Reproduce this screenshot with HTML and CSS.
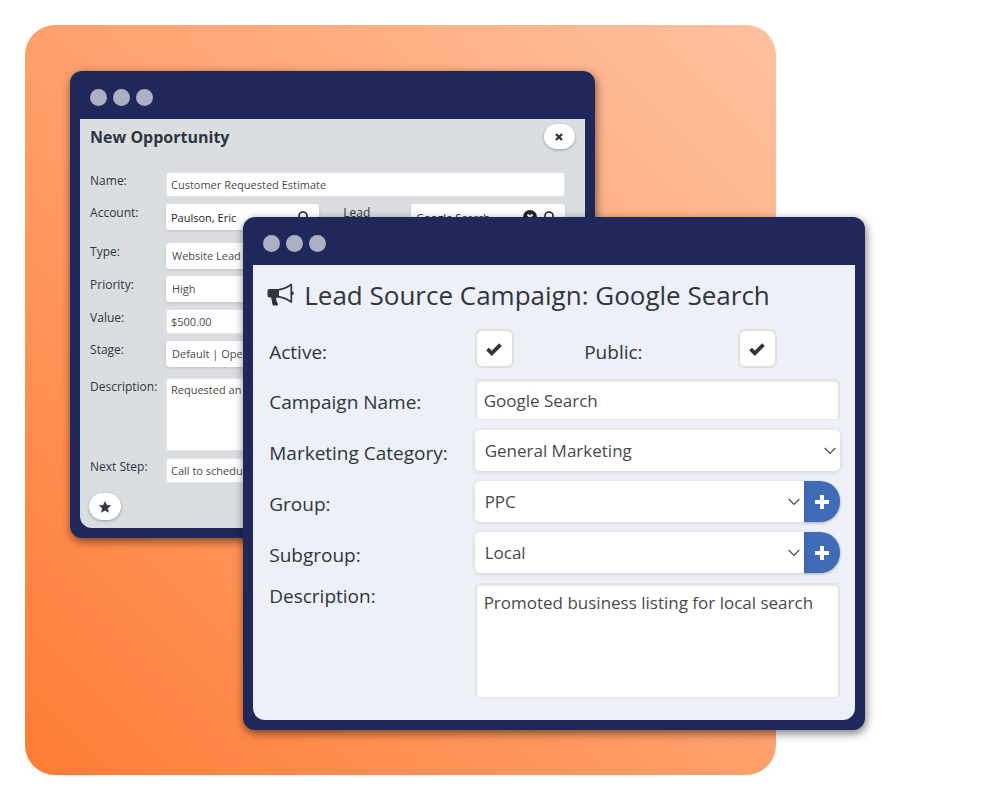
FILE: index.html
```html
<!DOCTYPE html>
<html lang="en">
  <head>
    <meta charset="UTF-8" />
    <meta name="viewport" content="width=device-width, initial-scale=1.0" />
    <title>Lead Source Campaign</title>
    <link rel="stylesheet" href="styles.css">
  </head>
  <body>
    <main class="scene">
      <div class="backdrop"></div>

      <section class="window window-opportunity">
        <div class="titlebar">
          <span class="dot"></span><span class="dot"></span><span class="dot"></span>
        </div>
        <form class="window-body">
          <header class="opp-header">
            <h2>New Opportunity</h2>
            <button type="button" class="pill" aria-label="Close">
              <svg width="8" height="8" viewBox="0 0 8 8"><path d="M1 1l6 6M7 1l-6 6" stroke="currentColor" stroke-width="2.4" /></svg>
            </button>
          </header>

          <div class="opp-fields">
            <label for="opp-name">Name:</label>
            <input id="opp-name" class="inset" type="text" value="Customer Requested Estimate" />

            <label for="opp-account">Account:</label>
            <div class="opp-split">
              <div class="lookup">
                <input id="opp-account" type="text" value="Paulson, Eric" />
                <svg width="12" height="14" viewBox="0 0 12 14"><circle cx="6" cy="6" r="4" fill="none" stroke="currentColor" stroke-width="1.6" /><path d="M8.5 9.5l3 4" stroke="currentColor" stroke-width="1.8" /></svg>
              </div>
              <label for="opp-source">Lead Source:</label>
              <div class="lookup">
                <input id="opp-source" type="text" value="Google Search" />
                <svg width="14" height="14" viewBox="0 0 14 14"><circle cx="7" cy="7" r="7" fill="currentColor" /><path d="M4.5 4.5l5 5M9.5 4.5l-5 5" stroke="#fff" stroke-width="2" /></svg>
                <svg width="12" height="14" viewBox="0 0 12 14"><circle cx="6" cy="6" r="4" fill="none" stroke="currentColor" stroke-width="1.6" /><path d="M8.5 9.5l3 4" stroke="currentColor" stroke-width="1.8" /></svg>
              </div>
            </div>

            <label for="opp-type">Type:</label>
            <select id="opp-type"><option>Website Lead</option></select>

            <label for="opp-priority">Priority:</label>
            <select id="opp-priority"><option>High</option></select>

            <label for="opp-value">Value:</label>
            <input id="opp-value" class="inset" type="text" value="$500.00" />

            <label for="opp-stage">Stage:</label>
            <select id="opp-stage" class="last-select"><option>Default | Open</option></select>

            <label for="opp-description">Description:</label>
            <textarea id="opp-description" class="inset">Requested an estimate</textarea>

            <label for="opp-next">Next Step:</label>
            <input id="opp-next" class="inset" type="text" value="Call to schedule" />
          </div>

          <button type="button" class="pill pill-star" aria-label="Favorite">
            <svg width="12" height="12" viewBox="0 0 24 24"><path d="M12 1l3.3 7.3 8 .9-6 5.4 1.7 7.9-7-4-7 4 1.7-7.9-6-5.4 8-.9z" fill="currentColor" stroke="currentColor" stroke-linejoin="round" /></svg>
          </button>
        </form>
      </section>

      <section class="window window-campaign">
        <div class="titlebar">
          <span class="dot"></span><span class="dot"></span><span class="dot"></span>
        </div>
        <form class="window-body">
          <h1>
            <svg width="27" height="24" viewBox="0 0 27 24">
              <path d="M2.5 6H12v8.5H9.5q-.8 2 .4 4l1 2.5q.3 1.5-1 1.5H7q-1.2 0-1.6-1.2L4.2 14.5H2.5q-2 0-2-2V8q0-2 2-2z" fill="currentColor" />
              <path d="M11 6.900Q18 6 24.3 1.5v17.5Q18 14.5 11 13.6" fill="none" stroke="currentColor" stroke-width="1.7" stroke-linejoin="round" />
              <path d="M24.5 8q2.3.4 2.3 2.3t-2.3 2.3z" fill="currentColor" />
            </svg>
            Lead Source Campaign: Google Search
          </h1>

          <div class="campaign-fields">
            <label for="active">Active:</label>
            <div class="check-row">
              <span class="check">
                <input id="active" type="checkbox" checked />
                <svg width="18" height="14" viewBox="0 0 18 14"><path d="M2.5 7l4.3 4.3 8.7-8.7" fill="none" stroke="currentColor" stroke-width="3.8" /></svg>
              </span>
              <label for="public">Public:</label>
              <span class="check">
                <input id="public" type="checkbox" checked />
                <svg width="18" height="14" viewBox="0 0 18 14"><path d="M2.5 7l4.3 4.3 8.7-8.7" fill="none" stroke="currentColor" stroke-width="3.8" /></svg>
              </span>
            </div>

            <label for="campaign-name">Campaign Name:</label>
            <input id="campaign-name" class="inset" type="text" value="Google Search" />

            <label for="category">Marketing Category:</label>
            <div class="select">
              <select id="category"><option>General Marketing</option></select>
              <svg width="12" height="8" viewBox="0 0 12 8"><path d="M.7 1L6 6.3 11.3 1" fill="none" stroke="currentColor" stroke-width="1.2" /></svg>
            </div>

            <label for="group">Group:</label>
            <div class="select-add">
              <div class="select">
                <select id="group"><option>PPC</option></select>
                <svg width="12" height="8" viewBox="0 0 12 8"><path d="M.7 1L6 6.3 11.3 1" fill="none" stroke="currentColor" stroke-width="1.2" /></svg>
              </div>
              <button type="button" class="add" aria-label="Add group">
                <svg width="14" height="14" viewBox="0 0 14 14"><path d="M7 2v10M2 7h10" stroke="currentColor" stroke-width="4" stroke-linecap="square" /></svg>
              </button>
            </div>

            <label for="subgroup">Subgroup:</label>
            <div class="select-add">
              <div class="select">
                <select id="subgroup"><option>Local</option></select>
                <svg width="12" height="8" viewBox="0 0 12 8"><path d="M.7 1L6 6.3 11.3 1" fill="none" stroke="currentColor" stroke-width="1.2" /></svg>
              </div>
              <button type="button" class="add" aria-label="Add subgroup">
                <svg width="14" height="14" viewBox="0 0 14 14"><path d="M7 2v10M2 7h10" stroke="currentColor" stroke-width="4" stroke-linecap="square" /></svg>
              </button>
            </div>

            <label for="description" class="label-top">Description:</label>
            <textarea id="description" class="inset">Promoted business listing for local search</textarea>
          </div>
        </form>
      </section>
    </main>
  </body>
</html>
```
FILE: styles.css
```css
* {
  margin: 0;
  padding: 0;
  box-sizing: border-box;
}

body {
  font-family: "Open Sans", "Noto Sans", sans-serif;
  background: #fff;
  color: #2e3640;
}

input,
select,
textarea,
button {
  font: inherit;
  border: none;
  outline: none;
  appearance: none;
  min-width: 0;
}

svg {
  flex: none;
}

/* backdrop and both windows share one grid cell */
.scene {
  display: grid;
  padding: 25px 0;
  min-height: 100vh;
}

.backdrop,
.window {
  grid-area: 1 / 1;
}

.backdrop {
  width: 75%;
  margin-left: 2.5%;
  border-radius: 30px;
  background: linear-gradient(45deg, #ff7c35 0%, #ffa06c 50%, #ffc19f 100%);
}

.window {
  align-self: start;
  background: #20285b;
  border-radius: 12px;
  padding: 0 10px 10px;
  box-shadow: 1px 3px 10px rgba(0, 0, 0, 0.55);
}

.window-opportunity {
  width: 52.4%;
  margin: 46px 0 0 7%;
}

.window-campaign {
  width: 62.1%;
  margin: 192px 0 45px 24.3%;
}

.titlebar {
  display: flex;
  align-items: center;
  gap: 6px;
  height: 48px;
  padding: 4px 10px 0;
}

.dot {
  width: 17px;
  height: 17px;
  border-radius: 50%;
  background: #adafc5;
}

.window-body {
  border-radius: 0 0 12px 12px;
}

/* New Opportunity */
.window-opportunity .window-body {
  background: #dadee1;
  font-size: 11px;
  line-height: 16px;
  padding-bottom: 8px;
}

.opp-header {
  display: flex;
  justify-content: space-between;
  align-items: center;
  height: 40px;
  padding: 0 10px 4px;
  border-bottom: 1px solid #dedede;
}

.opp-header h2 {
  font-size: 16px;
  line-height: 24px;
}

.pill {
  display: flex;
  align-items: center;
  justify-content: center;
  width: 31px;
  height: 25px;
  border-radius: 14px;
  background: #fff;
  color: #2e3640;
  box-shadow: 0 1px 3px rgba(0, 0, 0, 0.3);
}

.pill-star {
  width: 32px;
  height: 27px;
  margin: 10px 0 0 9px;
}

.opp-fields {
  display: grid;
  grid-template-columns: 16% 1fr;
  align-items: start;
  row-gap: 7px;
  padding: 13px 20px 0 10px;
}

.opp-fields label {
  padding-top: 1px;
  font-size: 12px;
}

.opp-fields input,
.opp-fields select,
.opp-fields textarea {
  width: 100%;
  height: 26px;
  padding: 0 6px;
  border-radius: 3px;
  background: #fff;
  color: #4a4a4a;
}

.opp-fields select,
.lookup {
  box-shadow: 0 1px 3px rgba(0, 0, 0, 0.12);
}

.opp-fields .inset {
  height: 25px;
  border: 1px solid #e2e4e6;
  padding: 0 4px;
}

.opp-fields textarea.inset {
  height: 73px;
  padding-top: 3px;
  resize: none;
}

.opp-fields .last-select {
  margin-bottom: 4px;
}

.opp-split {
  display: grid;
  grid-template-columns: 38.5% 11% 38.5%;
  justify-content: space-between;
  align-items: start;
  height: 32px;
}

.lookup {
  display: flex;
  align-items: center;
  gap: 6px;
  height: 26px;
  padding-right: 10px;
  border-radius: 3px;
  background: #fff;
  color: #1f2328;
}

.opp-fields .lookup input {
  flex: 1;
  padding: 0 5px;
  color: #1f2328;
}

/* Lead Source Campaign */
.window-campaign .window-body {
  background: #edf0f6;
  padding: 10px 15px 22px 16px;
  font-size: 17px;
  line-height: 26px;
}

.window-campaign h1 {
  display: flex;
  align-items: center;
  gap: 10px;
  margin-bottom: 14px;
  margin-left: -2px;
  font-size: 26px;
  font-weight: 400;
  line-height: 40px;
}

.campaign-fields {
  display: grid;
  grid-template-columns: 36% 1fr;
  align-items: start;
  row-gap: 10px;
}

.campaign-fields label {
  padding-top: 10px;
  font-size: 19px;
}

.campaign-fields .label-top {
  padding-top: 0;
}

.campaign-fields input[type="text"],
.campaign-fields select,
.campaign-fields textarea {
  width: 100%;
  height: 41px;
  padding: 0 10px;
  border-radius: 5px;
  background: #fff;
  color: #4a4a4a;
}

.campaign-fields input.inset[type="text"],
.campaign-fields textarea.inset {
  padding: 0 7px;
  border: 2px solid #e2e4e8;
  border-bottom-width: 1px;
  box-shadow: inset 0 1px 2px rgba(0, 0, 0, 0.1);
}

.campaign-fields textarea.inset {
  height: 115px;
  padding-top: 5px;
  resize: none;
}

.check-row {
  display: grid;
  grid-template-columns: 30% 42% 1fr;
  height: 40px;
}

.check {
  position: relative;
  width: 39px;
  height: 39px;
}

.check input {
  display: block;
  width: 39px;
  height: 39px;
  border: 2px solid #e0e0e0;
  border-radius: 7px;
  background: #fff;
}

.check svg {
  position: absolute;
  top: 13px;
  left: 10px;
  pointer-events: none;
}

.check input:not(:checked) + svg {
  display: none;
}

.select {
  position: relative;
  flex: 1;
}

.select select {
  display: block;
  box-shadow: 0 1px 5px rgba(0, 0, 0, 0.13);
}

.select svg {
  position: absolute;
  top: 17px;
  right: 4px;
  color: #4a4a4a;
  pointer-events: none;
}

.select-add {
  display: flex;
}

.select-add select {
  border-radius: 5px 0 0 5px;
}

.add {
  display: flex;
  align-items: center;
  justify-content: center;
  width: 36px;
  height: 41px;
  border-radius: 0 20px 20px 0;
  background: #406bb6;
  color: #fff;
  box-shadow: 0 1px 3px rgba(0, 0, 0, 0.3);
}
```
